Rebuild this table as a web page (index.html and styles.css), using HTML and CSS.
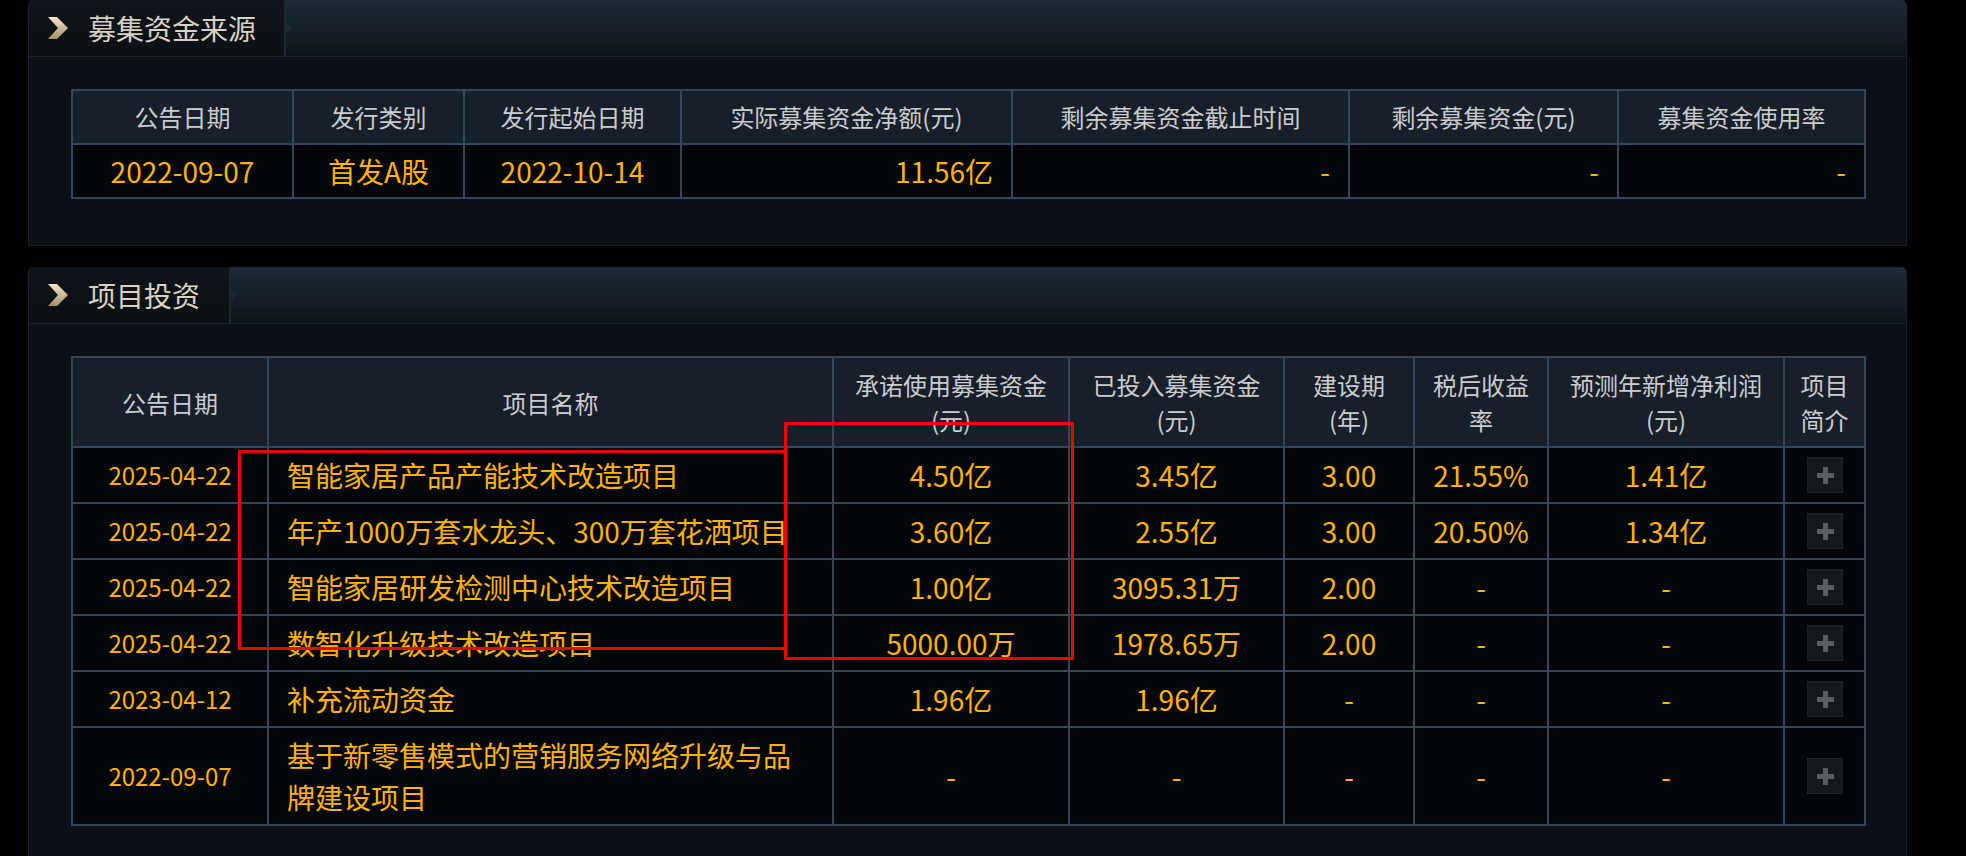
FILE: index.html
```html
<!DOCTYPE html>
<html lang="zh-CN">
<head>
  <meta charset="UTF-8" />
  <title>募集资金</title>
  <link rel="stylesheet" href="styles.css">
</head>
<body>
  <section class="panel">
    <div class="panel-head">
      <div class="tab tab-wide">
        <svg class="chev" width="21" height="22" viewBox="0 0 21 22"><defs><linearGradient id="cg1" x1="0" y1="0" x2="0" y2="1"><stop offset="0" stop-color="#f4e6c8"/><stop offset="1" stop-color="#a48c68"/></linearGradient></defs><polygon points="1,0 10,0 21,11 10,22 1,22 11,11" fill="url(#cg1)"/></svg>
        <span class="tab-title">募集资金来源</span>
      </div>
    </div>
    <div class="panel-body">
      <table class="grid">
        <colgroup><col style="width:221px"><col style="width:171px"><col style="width:217px"><col style="width:331px"><col style="width:337px"><col style="width:269px"><col style="width:247px"></colgroup>
        <thead>
          <tr><th>公告日期</th><th>发行类别</th><th>发行起始日期</th><th>实际募集资金净额(元)</th><th>剩余募集资金截止时间</th><th>剩余募集资金(元)</th><th>募集资金使用率</th></tr>
        </thead>
        <tbody>
          <tr><td>2022-09-07</td><td>首发A股</td><td>2022-10-14</td><td class="num">11.56亿</td><td class="num">-</td><td class="num">-</td><td class="num">-</td></tr>
        </tbody>
      </table>
    </div>
  </section>

  <section class="panel panel-last">
    <div class="panel-head">
      <div class="tab">
        <svg class="chev" width="21" height="22" viewBox="0 0 21 22"><defs><linearGradient id="cg2" x1="0" y1="0" x2="0" y2="1"><stop offset="0" stop-color="#f4e6c8"/><stop offset="1" stop-color="#a48c68"/></linearGradient></defs><polygon points="1,0 10,0 21,11 10,22 1,22 11,11" fill="url(#cg2)"/></svg>
        <span class="tab-title">项目投资</span>
      </div>
    </div>
    <div class="panel-body">
      <table class="grid tall">
        <colgroup><col style="width:196px"><col style="width:565px"><col style="width:236px"><col style="width:215px"><col style="width:130px"><col style="width:134px"><col style="width:236px"><col style="width:81px"></colgroup>
        <thead>
          <tr><th>公告日期</th><th>项目名称</th><th>承诺使用募集资金<br>(元)</th><th>已投入募集资金<br>(元)</th><th>建设期<br>(年)</th><th>税后收益<br>率</th><th>预测年新增净利润<br>(元)</th><th>项目<br>简介</th></tr>
        </thead>
        <tbody>
          <tr><td class="date">2025-04-22</td><td class="name">智能家居产品产能技术改造项目</td><td>4.50亿</td><td>3.45亿</td><td>3.00</td><td>21.55%</td><td>1.41亿</td><td><span class="plus"></span></td></tr>
          <tr><td class="date">2025-04-22</td><td class="name">年产1000万套水龙头、300万套花洒项目</td><td>3.60亿</td><td>2.55亿</td><td>3.00</td><td>20.50%</td><td>1.34亿</td><td><span class="plus"></span></td></tr>
          <tr><td class="date">2025-04-22</td><td class="name">智能家居研发检测中心技术改造项目</td><td>1.00亿</td><td>3095.31万</td><td>2.00</td><td>-</td><td>-</td><td><span class="plus"></span></td></tr>
          <tr><td class="date">2025-04-22</td><td class="name">数智化升级技术改造项目</td><td>5000.00万</td><td>1978.65万</td><td>2.00</td><td>-</td><td>-</td><td><span class="plus"></span></td></tr>
          <tr><td class="date">2023-04-12</td><td class="name">补充流动资金</td><td>1.96亿</td><td>1.96亿</td><td>-</td><td>-</td><td>-</td><td><span class="plus"></span></td></tr>
          <tr><td class="date">2022-09-07</td><td class="name">基于新零售模式的营销服务网络升级与品牌建设项目</td><td>-</td><td>-</td><td>-</td><td>-</td><td>-</td><td><span class="plus"></span></td></tr>
        </tbody>
      </table>
    </div>
    <div class="mark mark-names"></div>
    <div class="mark mark-money"></div>
  </section>
</body>
</html>
```

FILE: styles.css
```css
*{box-sizing:border-box}
body{margin:0;background:#000;font-family:"Noto Sans CJK SC","Noto Sans",sans-serif;overflow:hidden}

.panel{position:relative;width:1879px;margin:0 0 21px 28px;background:#0b0f16;border:1px solid #1a212a;border-top:none;border-radius:5px 5px 0 0}
.panel-last{border-bottom:none}
.panel-head{height:57px;display:flex;background:linear-gradient(#1d2a38,#0e141b);border-bottom:1px solid #1b222b;border-radius:5px 5px 0 0}
.tab{position:relative;width:202px;display:flex;align-items:center;gap:20px;padding-left:18px;background:linear-gradient(#0e1419,#0b1014);border-right:2px solid #1e2832;border-radius:5px 0 0 0}
.tab-wide{width:257px}
.tab::after{content:"";position:absolute;right:-8px;top:21px;border-left:7px solid #1e2832;border-top:7px solid transparent;border-bottom:7px solid transparent}
.chev{display:block;flex:none}
.tab-title{font-size:28px;color:#d9d1c1;line-height:1}

.panel-body{padding:32px 42px 46px}

.grid{width:100%;table-layout:fixed;border-collapse:collapse;border:2px solid #35465a}
.grid th,.grid td{border:2px solid #35465a;text-align:center;white-space:nowrap}
.grid th{background:#171f2a;color:#cacbcd;font-size:24px;font-weight:normal;line-height:34px;padding:9px 6px}
.grid.tall th{line-height:35px;padding:9px 4px}
.grid td{background:#030609;color:#ffb300;font-size:28px;line-height:42px;padding:5px 18px}
.grid.tall td{padding:6px 6px;height:56px}
.grid.tall td.date{font-size:24px}
.grid td.num{text-align:right}
.grid.tall td.name{text-align:left;padding:6px 18px;white-space:normal}

.plus{display:block;margin:0 auto;position:relative;width:36px;height:36px;background:#15181b;border:1px solid #1f2327}
.plus::before,.plus::after{content:"";position:absolute;background:#5a5c5f}
.plus::before{left:9px;top:15px;width:17px;height:5px}
.plus::after{left:15px;top:9px;width:5px;height:17px}

.mark{position:absolute;border:3px solid #f00000;pointer-events:none}
.mark-names{left:209px;top:183px;width:549px;height:200px}
.mark-money{left:755px;top:155px;width:290px;height:238px}
```
